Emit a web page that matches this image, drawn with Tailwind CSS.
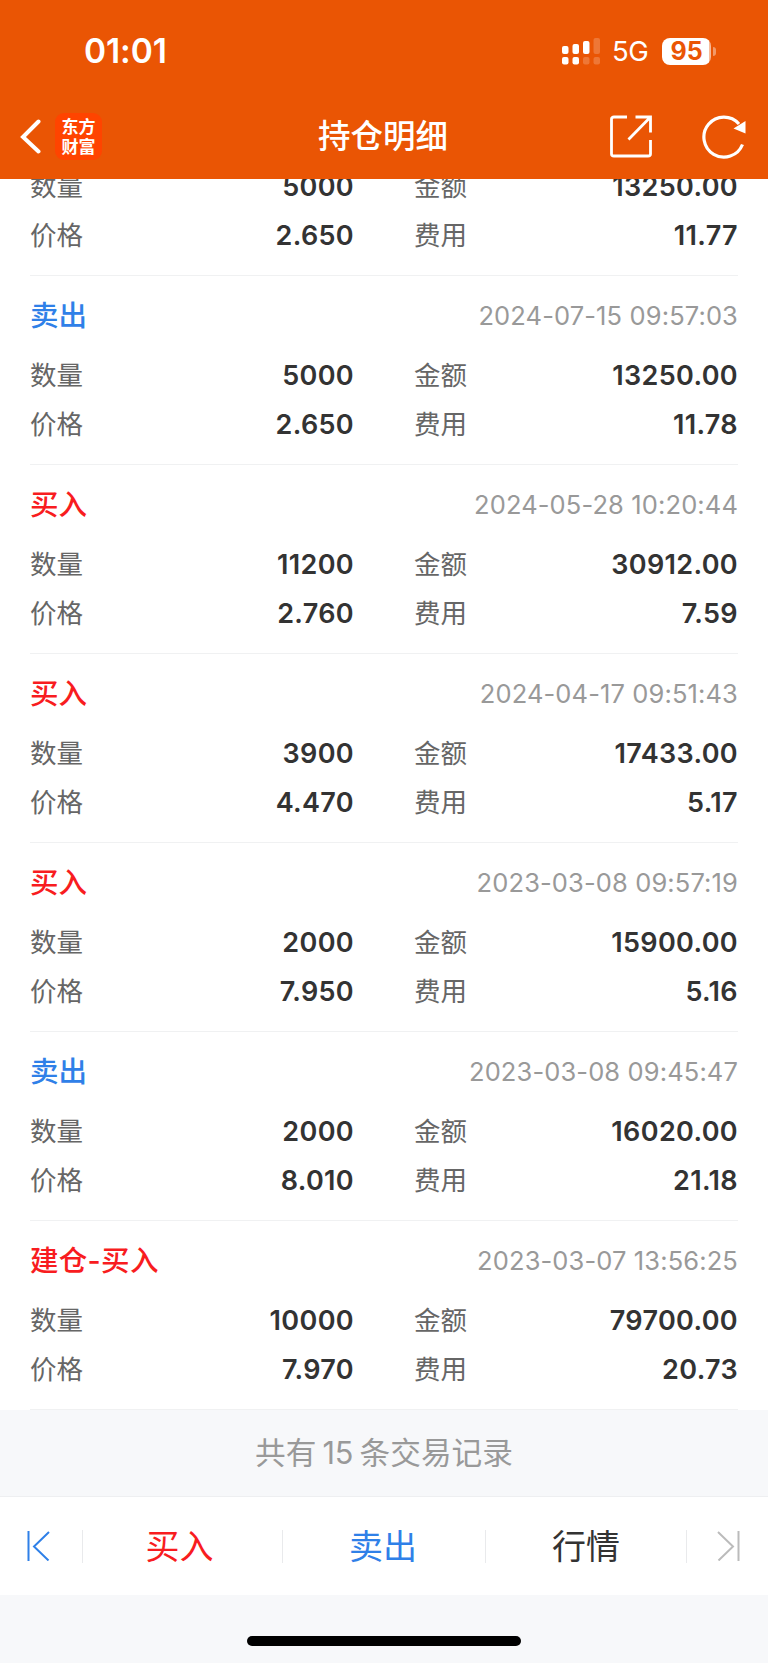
<!DOCTYPE html>
<html lang="zh-CN">

<head>
  <meta charset="UTF-8" />
  <meta name="viewport" content="width=device-width, initial-scale=1.0" />
  <title>持仓明细</title>
  <script src="https://cdn.jsdelivr.net/npm/@tailwindcss/browser@4"></script>
</head>

<body class="bg-[#f7f8fa] font-['Inter','Noto_Sans_CJK_SC',sans-serif] text-[#333333]">

  <div class="flex flex-col w-[768px] h-[1663px] overflow-hidden">
    <!-- header -->
    <header class="relative z-10 shrink-0 h-[179px] bg-[#ea5504] text-white">
      <div class="flex items-center justify-between h-[94px] pt-[8px] pl-[84px] pr-[52px]">
        <div class="pt-px text-[33.5px] font-semibold leading-none tracking-[-0.1px]">01:01</div>
        <div class="flex items-center">
          <svg class="w-[39px] h-[28px]" viewBox="0 0 39 28" fill="#fff">
            <rect x="0" y="9" width="6.5" height="8" rx="2" />
            <rect x="10.5" y="7" width="6.5" height="10" rx="2" />
            <rect x="21" y="4" width="6.5" height="13" rx="2" />
            <rect x="31.5" y="1" width="6.5" height="16" rx="2" opacity=".2" />
            <rect x="0" y="20" width="6.5" height="7.5" rx="2" />
            <rect x="10.5" y="20" width="6.5" height="7.5" rx="2" />
            <rect x="21" y="20" width="6.5" height="7.5" rx="2" opacity=".2" />
            <rect x="31.5" y="20" width="6.5" height="7.5" rx="2" opacity=".2" />
          </svg>
          <span class="ml-[11px] w-[38px] pt-[2px] text-[27.5px] leading-none tracking-[-0.5px]">5G</span>
          <div class="ml-[12px] flex items-center justify-center w-[49px] h-[27px] rounded-[8px] bg-linear-to-r from-white from-95% to-white/60 to-95% pt-px text-[25px] leading-none font-bold text-[#ea5504]">95</div>
          <div class="ml-[2px] w-[3px] h-[9px] rounded-r-full bg-white/40"></div>
        </div>
      </div>
      <div class="grid grid-cols-3 items-center h-[85px] pl-[20px] pr-[22px]">
        <div class="flex items-center">
          <svg class="w-[22px] h-[36px]" viewBox="0 0 22 36" fill="none" stroke="#fff" stroke-width="4" stroke-linecap="round">
            <path d="M18.5 2.5 3 18 18.5 32.5" />
          </svg>
          <div class="ml-[13px] flex flex-col items-center justify-center w-[47px] h-[47px] pb-[2px] rounded-[9px] bg-[#ff4400] font-['Noto_Sans_CJK_SC',sans-serif] text-[17px] leading-[20px] font-bold">
            <div class="h-[20px]">东方</div>
            <div class="h-[20px]">财富</div>
          </div>
        </div>
        <h1 class="pt-[2px] text-center text-[32.5px] leading-none font-medium whitespace-nowrap">持仓明细</h1>
        <div class="flex items-center justify-end gap-[50px]">
          <svg class="w-[43px] h-[43px]" viewBox="0 0 43 43" fill="none" stroke="#fff" stroke-width="2.8">
            <path d="M18 2H5Q2.500 2 2.500 4V39Q2.500 41 5 41H39Q41.500 41 41.500 39V25" />
            <path d="M26.500 2H41.500V17.500M41.500 2 19.500 24.500" />
          </svg>
          <svg class="w-[44px] h-[44px]" viewBox="0 0 44 44" fill="none" stroke="#fff" stroke-width="3.2">
            <path d="M40.500 29.500A20 20 0 1 1 37 9" />
            <path d="M43.500 6V18.500L31.500 13.500Z" fill="#fff" stroke="none" />
          </svg>
        </div>
      </div>
    </header>

    <!-- trade records -->
    <main class="shrink-0 -mt-[92px] bg-white px-[30px] text-[27px] leading-none">
      <section class="h-[189px] pt-[75px] border-b border-[#f0f1f2]">
        <div class="grid grid-cols-2 gap-x-[60px]">
          <div class="flex items-center justify-between h-[49px]"><span class="text-[26.5px] text-[#666666]">数量</span><b class="font-semibold tracking-[0.35px]">5000</b></div>
          <div class="flex items-center justify-between h-[49px]"><span class="text-[26.5px] text-[#666666]">金额</span><b class="font-semibold tracking-[0.35px]">13250.00</b></div>
          <div class="flex items-center justify-between h-[49px]"><span class="text-[26.5px] text-[#666666]">价格</span><b class="font-semibold tracking-[0.35px]">2.650</b></div>
          <div class="flex items-center justify-between h-[49px]"><span class="text-[26.5px] text-[#666666]">费用</span><b class="font-semibold tracking-[0.35px]">11.77</b></div>
        </div>
      </section>

      <section class="h-[189px] pt-[15px] border-b border-[#f0f1f2]">
        <div class="flex items-center justify-between h-[50px] mb-[10px]">
          <h2 class="text-[28.5px] font-medium text-[#2f80e8]">卖出</h2>
          <time class="text-[25.5px] tracking-[0.12px] text-[#999999]">2024-07-15 09:57:03</time>
        </div>
        <div class="grid grid-cols-2 gap-x-[60px]">
          <div class="flex items-center justify-between h-[49px]"><span class="text-[26.5px] text-[#666666]">数量</span><b class="font-semibold tracking-[0.35px]">5000</b></div>
          <div class="flex items-center justify-between h-[49px]"><span class="text-[26.5px] text-[#666666]">金额</span><b class="font-semibold tracking-[0.35px]">13250.00</b></div>
          <div class="flex items-center justify-between h-[49px]"><span class="text-[26.5px] text-[#666666]">价格</span><b class="font-semibold tracking-[0.35px]">2.650</b></div>
          <div class="flex items-center justify-between h-[49px]"><span class="text-[26.5px] text-[#666666]">费用</span><b class="font-semibold tracking-[0.35px]">11.78</b></div>
        </div>
      </section>

      <section class="h-[189px] pt-[15px] border-b border-[#f0f1f2]">
        <div class="flex items-center justify-between h-[50px] mb-[10px]">
          <h2 class="text-[28.5px] font-medium text-[#f81c20]">买入</h2>
          <time class="text-[25.5px] tracking-[0.12px] text-[#999999]">2024-05-28 10:20:44</time>
        </div>
        <div class="grid grid-cols-2 gap-x-[60px]">
          <div class="flex items-center justify-between h-[49px]"><span class="text-[26.5px] text-[#666666]">数量</span><b class="font-semibold tracking-[0.35px]">11200</b></div>
          <div class="flex items-center justify-between h-[49px]"><span class="text-[26.5px] text-[#666666]">金额</span><b class="font-semibold tracking-[0.35px]">30912.00</b></div>
          <div class="flex items-center justify-between h-[49px]"><span class="text-[26.5px] text-[#666666]">价格</span><b class="font-semibold tracking-[0.35px]">2.760</b></div>
          <div class="flex items-center justify-between h-[49px]"><span class="text-[26.5px] text-[#666666]">费用</span><b class="font-semibold tracking-[0.35px]">7.59</b></div>
        </div>
      </section>

      <section class="h-[189px] pt-[15px] border-b border-[#f0f1f2]">
        <div class="flex items-center justify-between h-[50px] mb-[10px]">
          <h2 class="text-[28.5px] font-medium text-[#f81c20]">买入</h2>
          <time class="text-[25.5px] tracking-[0.12px] text-[#999999]">2024-04-17 09:51:43</time>
        </div>
        <div class="grid grid-cols-2 gap-x-[60px]">
          <div class="flex items-center justify-between h-[49px]"><span class="text-[26.5px] text-[#666666]">数量</span><b class="font-semibold tracking-[0.35px]">3900</b></div>
          <div class="flex items-center justify-between h-[49px]"><span class="text-[26.5px] text-[#666666]">金额</span><b class="font-semibold tracking-[0.35px]">17433.00</b></div>
          <div class="flex items-center justify-between h-[49px]"><span class="text-[26.5px] text-[#666666]">价格</span><b class="font-semibold tracking-[0.35px]">4.470</b></div>
          <div class="flex items-center justify-between h-[49px]"><span class="text-[26.5px] text-[#666666]">费用</span><b class="font-semibold tracking-[0.35px]">5.17</b></div>
        </div>
      </section>

      <section class="h-[189px] pt-[15px] border-b border-[#f0f1f2]">
        <div class="flex items-center justify-between h-[50px] mb-[10px]">
          <h2 class="text-[28.5px] font-medium text-[#f81c20]">买入</h2>
          <time class="text-[25.5px] tracking-[0.12px] text-[#999999]">2023-03-08 09:57:19</time>
        </div>
        <div class="grid grid-cols-2 gap-x-[60px]">
          <div class="flex items-center justify-between h-[49px]"><span class="text-[26.5px] text-[#666666]">数量</span><b class="font-semibold tracking-[0.35px]">2000</b></div>
          <div class="flex items-center justify-between h-[49px]"><span class="text-[26.5px] text-[#666666]">金额</span><b class="font-semibold tracking-[0.35px]">15900.00</b></div>
          <div class="flex items-center justify-between h-[49px]"><span class="text-[26.5px] text-[#666666]">价格</span><b class="font-semibold tracking-[0.35px]">7.950</b></div>
          <div class="flex items-center justify-between h-[49px]"><span class="text-[26.5px] text-[#666666]">费用</span><b class="font-semibold tracking-[0.35px]">5.16</b></div>
        </div>
      </section>

      <section class="h-[189px] pt-[15px] border-b border-[#f0f1f2]">
        <div class="flex items-center justify-between h-[50px] mb-[10px]">
          <h2 class="text-[28.5px] font-medium text-[#2f80e8]">卖出</h2>
          <time class="text-[25.5px] tracking-[0.12px] text-[#999999]">2023-03-08 09:45:47</time>
        </div>
        <div class="grid grid-cols-2 gap-x-[60px]">
          <div class="flex items-center justify-between h-[49px]"><span class="text-[26.5px] text-[#666666]">数量</span><b class="font-semibold tracking-[0.35px]">2000</b></div>
          <div class="flex items-center justify-between h-[49px]"><span class="text-[26.5px] text-[#666666]">金额</span><b class="font-semibold tracking-[0.35px]">16020.00</b></div>
          <div class="flex items-center justify-between h-[49px]"><span class="text-[26.5px] text-[#666666]">价格</span><b class="font-semibold tracking-[0.35px]">8.010</b></div>
          <div class="flex items-center justify-between h-[49px]"><span class="text-[26.5px] text-[#666666]">费用</span><b class="font-semibold tracking-[0.35px]">21.18</b></div>
        </div>
      </section>

      <section class="h-[189px] pt-[15px] border-b border-[#f0f1f2]">
        <div class="flex items-center justify-between h-[50px] mb-[10px]">
          <h2 class="text-[28.5px] font-medium tracking-[0.3px] text-[#f81c20]">建仓-买入</h2>
          <time class="text-[25.5px] tracking-[0.12px] text-[#999999]">2023-03-07 13:56:25</time>
        </div>
        <div class="grid grid-cols-2 gap-x-[60px]">
          <div class="flex items-center justify-between h-[49px]"><span class="text-[26.5px] text-[#666666]">数量</span><b class="font-semibold tracking-[0.35px]">10000</b></div>
          <div class="flex items-center justify-between h-[49px]"><span class="text-[26.5px] text-[#666666]">金额</span><b class="font-semibold tracking-[0.35px]">79700.00</b></div>
          <div class="flex items-center justify-between h-[49px]"><span class="text-[26.5px] text-[#666666]">价格</span><b class="font-semibold tracking-[0.35px]">7.970</b></div>
          <div class="flex items-center justify-between h-[49px]"><span class="text-[26.5px] text-[#666666]">费用</span><b class="font-semibold tracking-[0.35px]">20.73</b></div>
        </div>
      </section>
    </main>

    <div class="flex shrink-0 items-center justify-center gap-[6px] h-[86px] text-[30.7px] leading-none text-[#999999]">
      <span>共有</span><span>15</span><span>条交易记录</span>
    </div>

    <!-- bottom tabs -->
    <nav class="flex shrink-0 items-center h-[99px] bg-white border-t border-[#eeeff1] text-[34px] leading-none">
      <div class="flex items-center w-[83px] h-[33px] pl-[27px] border-r border-[#e9eaec]">
        <svg class="w-[23px] h-[30px]" viewBox="0 0 23 30" fill="none" stroke="#2f80e8" stroke-width="2">
          <path d="M1.500 0V30M22 1 7 15.500 21.500 29.500" />
        </svg>
      </div>
      <div class="flex items-center justify-center w-[200px] h-[33px] pt-px pr-[6px] border-r border-[#e9eaec] text-[#f81c20]">买入</div>
      <div class="flex items-center justify-center w-[203px] h-[33px] pt-px pr-[2px] border-r border-[#e9eaec] text-[#2f80e8]">卖出</div>
      <div class="flex items-center justify-center w-[201px] h-[33px] pt-px border-r border-[#e9eaec]">行情</div>
      <div class="flex items-center h-[33px] pl-[30px]">
        <svg class="w-[23px] h-[30px]" viewBox="0 0 23 30" fill="none" stroke="#bbbbbb" stroke-width="2">
          <path d="M21.500 0V30M1 1 16 15.500 1.500 29.500" />
        </svg>
      </div>
    </nav>

    <div class="flex shrink-0 justify-center h-[68px] pt-[41px]">
      <div class="w-[274px] h-[10px] rounded-full bg-black"></div>
    </div>
  </div>

</body>

</html>
